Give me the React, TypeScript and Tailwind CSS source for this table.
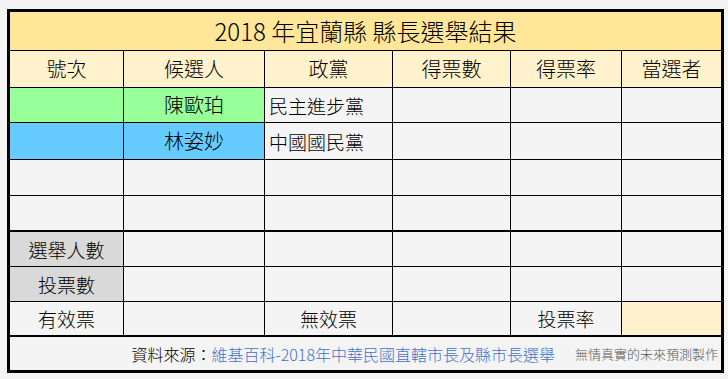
const font = { fontFamily: '"Noto Sans CJK TC", "Noto Sans", sans-serif' };

const widths = ["w-[114px]", "w-[141px]", "w-[128px]", "w-[118px]", "w-[111px]", "w-[99px]"];

type Cell = { text?: string; bg?: string; align?: "left" | "center"; size?: string };

function Row({ cells, h, thick }: { cells: Cell[]; h: string; thick?: boolean }) {
  return (
    <div className={`flex ${h} ${thick ? "border-b-2" : "border-b"} border-black`}>
      {cells.map((c, i) => (
        <div
          key={i}
          className={`${widths[i]} ${i < 5 ? "border-r border-black" : ""} ${c.bg ?? ""} flex items-center ${
            c.align === "left" ? "justify-start pl-[4px]" : "justify-center"
          } ${c.size ?? "text-[19px]"} text-black leading-none`}
        >
          {c.text}
        </div>
      ))}
    </div>
  );
}

const empty: Cell[] = [{}, {}, {}, {}, {}, {}];

export default function App() {
  return (
    <div className="min-h-[379px] bg-[#f4f4f4] pt-[9px] pl-[7px] font-light" style={font}>
      <div className="w-[717px] border-[3px] border-black">
        <div className="h-[39px] bg-[#ffe699] border-b border-black flex items-center justify-center text-[24px] text-black leading-none">
          2018 年宜蘭縣 縣長選舉結果
        </div>
        <Row
          h="h-[37px]"
          cells={["號次", "候選人", "政黨", "得票數", "得票率", "當選者"].map((t) => ({
            text: t,
            bg: "bg-[#fff2cc]",
            size: "text-[20px]",
          }))}
        />
        <Row
          h="h-[35px]"
          cells={[
            { bg: "bg-[#99ff99]" },
            { text: "陳歐珀", bg: "bg-[#99ff99]", size: "text-[20px]" },
            { text: "民主進步黨", align: "left" },
            {},
            {},
            {},
          ]}
        />
        <Row
          h="h-[37px]"
          cells={[
            { bg: "bg-[#66ccff]" },
            { text: "林姿妙", bg: "bg-[#66ccff]", size: "text-[20px]" },
            { text: "中國國民黨", align: "left" },
            {},
            {},
            {},
          ]}
        />
        <Row h="h-[36px]" cells={empty} />
        <Row h="h-[36px]" cells={empty} thick />
        <Row h="h-[35px]" cells={[{ text: "選舉人數", bg: "bg-[#d9d9d9]" }, {}, {}, {}, {}, {}]} />
        <Row h="h-[35px]" cells={[{ text: "投票數", bg: "bg-[#d9d9d9]" }, {}, {}, {}, {}, {}]} />
        <Row
          h="h-[35px]"
          thick
          cells={[{ text: "有效票" }, {}, { text: "無效票" }, {}, { text: "投票率" }, { bg: "bg-[#fff2cc]" }]}
        />
        <div className="h-[33px] flex items-center justify-end gap-[20px] pr-[3px] leading-none">
          <span className="text-[16px] text-black">
            資料來源：<span className="text-[#4472c4]">維基百科-2018年中華民國直轄市長及縣市長選舉</span>
          </span>
          <span className="text-[13px] text-[#595959]">無情真實的未來預測製作</span>
        </div>
      </div>
    </div>
  );
}
